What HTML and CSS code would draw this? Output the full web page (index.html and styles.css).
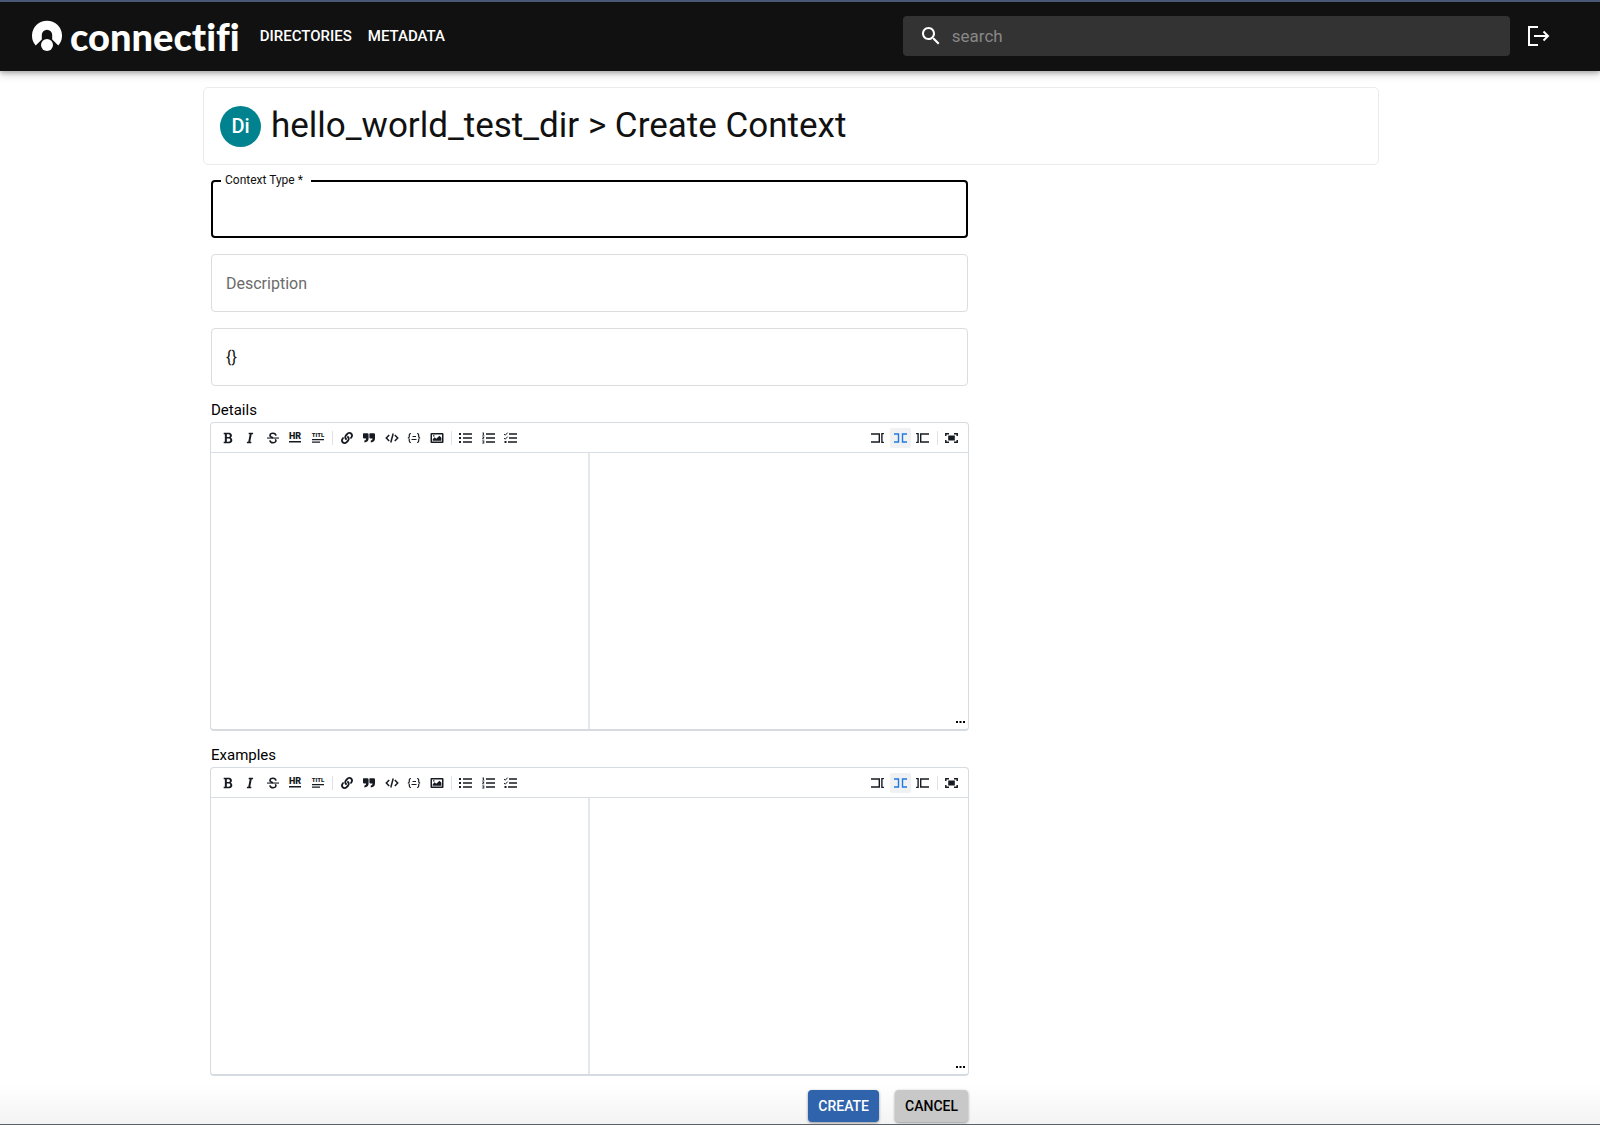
FILE: index.html
```html
<!DOCTYPE html>
<html lang="en">
<head>
<meta charset="utf-8">
<meta name="viewport" content="width=device-width, initial-scale=1">
<title>Connectifi - Create Context</title>
<link rel="stylesheet" href="styles.css">
</head>
<body>
<svg class="sprite" aria-hidden="true">
  <symbol id="bold" viewBox="0 0 384 512"><path d="M304.793 243.891c33.639-18.537 53.657-54.16 53.657-95.693 0-48.236-26.25-87.626-68.626-104.179C265.138 34.01 240.849 32 209.661 32H24c-8.837 0-16 7.163-16 16v33.113c0 8.837 7.163 16 16 16h33.113v318.53H24c-8.837 0-16 7.163-16 16V464c0 8.837 7.163 16 16 16h195.69c24.203 0 44.834-1.289 66.866-7.584C337.52 457.193 376 410.647 376 350.014c0-52.168-26.573-91.684-71.207-106.123zM142.217 100.809h67.444c16.294 0 27.536 2.019 37.525 6.717 15.828 8.479 24.906 26.502 24.906 49.446 0 35.029-20.32 56.79-53.029 56.79h-76.846V100.809zm112.642 305.475c-10.14 4.056-22.677 4.907-31.409 4.907h-81.233V281.943h84.367c39.645 0 63.057 25.38 63.057 63.653.001 28.425-13.66 52.483-34.782 60.688z"/></symbol>
  <symbol id="italic" viewBox="0 0 320 512"><path d="M204.758 416h-33.849l62.092-320h40.725a16 16 0 0 0 15.704-12.937l6.242-32C297.599 41.184 290.034 32 279.968 32H120.235a16 16 0 0 0-15.704 12.937l-6.242 32C96.362 86.816 103.927 96 113.993 96h33.846l-62.09 320H46.278a16 16 0 0 0-15.704 12.935l-6.245 32C22.402 470.815 29.965 480 40.034 480h158.479a16 16 0 0 0 15.704-12.935l6.245-32c1.927-9.88-5.638-19.065-15.704-19.065z"/></symbol>
  <symbol id="strike" viewBox="0 0 12 12"><path fill="none" stroke="currentColor" stroke-width="1.6" d="M9 3.6C8.700 2 7.500 1.300 6 1.300 4.200 1.300 3 2.200 3 3.500 3 4.800 4.200 5.300 6 5.800M8.300 7.300C9.800 9 8.500 10.700 6.200 10.700 4.300 10.700 3.100 9.900 2.900 8.300"/><path d="M0 5.500h12v1.100H0z"/></symbol>
  <symbol id="hr" viewBox="0 0 14 12"><text x="7" y="7" text-anchor="middle" class="glyph">HR</text><path d="M1 9h12v1.500H1z"/></symbol>
  <symbol id="title" viewBox="0 0 14 12"><text x="7" y="5" text-anchor="middle" class="glyph glyph-small">TITL</text><path d="M1 7h12v1.300H1zM1 9.500h8v1.300H1z"/></symbol>
  <symbol id="link" viewBox="0 0 512 512"><path d="M326.612 185.391c59.747 59.809 58.927 155.698.36 214.59-.11.12-.24.25-.36.37l-67.2 67.2c-59.27 59.27-155.699 59.262-214.96 0-59.27-59.26-59.27-155.7 0-214.96l37.106-37.106c9.84-9.84 26.786-3.3 27.294 10.606.648 17.722 3.826 35.527 9.69 52.721 1.986 5.822.567 12.262-3.783 16.612l-13.087 13.087c-28.026 28.026-28.905 73.66-1.155 101.96 28.024 28.579 74.086 28.749 102.325.51l67.2-67.19c28.191-28.191 28.073-73.757 0-101.83-3.701-3.694-7.429-6.564-10.341-8.569a16.037 16.037 0 0 1-6.947-12.606c-.396-10.567 3.348-21.456 11.698-29.806l21.054-21.055c5.521-5.521 14.182-6.199 20.584-1.731a152.482 152.482 0 0 1 20.522 17.197zM467.547 44.449c-59.261-59.262-155.69-59.27-214.96 0l-67.2 67.2c-.12.12-.25.25-.36.37-58.566 58.892-59.387 154.781.36 214.59a152.454 152.454 0 0 0 20.521 17.196c6.402 4.468 15.064 3.789 20.584-1.731l21.054-21.055c8.35-8.35 12.094-19.239 11.698-29.806a16.037 16.037 0 0 0-6.947-12.606c-2.912-2.005-6.640-4.875-10.341-8.569-28.073-28.073-28.191-73.639 0-101.830l67.200-67.190c28.239-28.239 74.300-28.069 102.325.510 27.750 28.300 26.872 73.934-1.155 101.960l-13.087 13.087c-4.350 4.350-5.769 10.790-3.783 16.612 5.864 17.194 9.042 34.999 9.690 52.721.509 13.906 17.454 20.446 27.294 10.606l37.106-37.106c59.271-59.259 59.271-155.699.001-214.959z"/></symbol>
  <symbol id="quote" viewBox="0 0 12 12"><path d="M.6 1.300h3.700q1.300 0 1.300 1.300v3.600Q5.600 10 1.400 10.400V8.600Q3.100 8.300 3.200 6.400H.8Q0 6.400 0 5.600V2Q0 1.300.6 1.300zM7 1.300h3.700Q12 1.300 12 2.600v3.600Q12 10 7.800 10.400V8.600Q9.500 8.300 9.600 6.400H7.200q-.8 0-.8-.8V2q0-.7.6-.7z"/></symbol>
  <symbol id="code" viewBox="0 0 14 12"><path fill="none" stroke="currentColor" stroke-width="1.500" d="M4.200 3 1.300 6l2.900 3M9.800 3l2.900 3-2.900 3M8.200 1.500 5.800 10.500"/></symbol>
  <symbol id="block" viewBox="0 0 14 12"><path fill="none" stroke="currentColor" stroke-width="1.200" d="M4 1.500Q2.300 1.500 2.300 3v1.500Q2.300 6 .8 6q1.500 0 1.500 1.500V9q0 1.500 1.700 1.500M10 1.500q1.700 0 1.700 1.500v1.500Q11.700 6 13.200 6q-1.500 0-1.500 1.500V9q0 1.500-1.700 1.500"/><path fill="none" stroke="currentColor" d="M5.500 4.500h3.500M4.500 7.500h5"/></symbol>
  <symbol id="image" viewBox="0 0 14 12"><path fill-rule="evenodd" d="M1.500 1h11q1 0 1 1v8q0 1-1 1h-11q-1 0-1-1V2q0-1 1-1zM2 2.400V9.500h10V2.400zM2.700 8.800V7.200l2-2 1.500 1.500 3.300-3 1.900 2v3.100zM3 3.200h1.500v1.400H3z"/></symbol>
  <symbol id="ul" viewBox="0 0 13 12"><path d="M0 1h2v2H0zM4 1.300h9v1.400H4zM0 5h2v2H0zM4 5.300h9v1.400H4zM0 9h2v2H0zM4 9.300h9v1.400H4z"/></symbol>
  <symbol id="ol" viewBox="0 0 13 12"><path d="M4 1.300h9v1.400H4zM4 5.300h9v1.400H4zM4 9.300h9v1.400H4zM.7.500h1.200V3h.6v.600H.2V3h.6V1.200H.3zM.2 4.500h2v1.300L1.200 6.700h1.100v.600H.2v-.700l1-1V5.200h-1zM.2 8.500h2.100v3H.2v-.700h1.300v-.500H.5v-.600h1v-.500H.2z"/></symbol>
  <symbol id="check" viewBox="0 0 13 12"><path d="M5 1.300h8v1.400H5zM5 5.300h8v1.400H5zM4 9.300h9v1.400H4zM.5 9h2v2h-2z"/><path fill="none" stroke="currentColor" d="m0 2 1.300 1.200L3.700.600M0 6l1.300 1.200 2.400-2.600"/></symbol>
  <symbol id="edit" viewBox="0 0 13 12"><path fill="none" stroke="currentColor" stroke-width="1.400" d="M0 2h8.300v8H0M12.900 1.600h-2v8.800h2"/></symbol>
  <symbol id="live" viewBox="0 0 13 12"><path fill="none" stroke="currentColor" stroke-width="1.400" d="M0 2h4.500v8H0M13 2H8.500v8H13"/></symbol>
  <symbol id="preview" viewBox="0 0 13 12"><path fill="none" stroke="currentColor" stroke-width="1.400" d="M13 2H4.700v8H13M.1 1.600h2v8.800h-2"/></symbol>
  <symbol id="full" viewBox="0 0 13 12"><path d="M3.200 3.500h6.600v5H3.200z"/><path fill="none" stroke="currentColor" stroke-width="1.500" d="M.8 4V1.700H4M9 1.700h3.200V4M12.200 8v2.300H9M4 10.300H.8V8"/></symbol>
</svg>

<header class="topbar">
  <a class="brand" href="#" aria-label="connectifi">
    <svg class="brand-mark" viewBox="0 0 30 31" aria-hidden="true"><path fill="currentColor" d="M3.700 25.500A15 15 0 1 1 26.300 25.500L20.200 19.500V15a5.200 5.200 0 0 0-10.400 0v4.500z"/><circle cx="15" cy="25" r="6" fill="currentColor"/></svg>
    <span class="brand-name">connectifi</span>
  </a>
  <nav class="nav">
    <a href="#">DIRECTORIES</a>
    <a href="#">METADATA</a>
  </nav>
  <label class="search">
    <svg viewBox="0 0 24 24" aria-hidden="true"><path fill="currentColor" d="M15.500 14h-.790l-.280-.270C15.410 12.590 16 11.110 16 9.500 16 5.910 13.090 3 9.500 3S3 5.910 3 9.500 5.910 16 9.500 16c1.610 0 3.090-.590 4.230-1.570l.270.280v.790l5 4.990L20.490 19l-4.990-5zm-6 0C7.010 14 5 11.990 5 9.500S7.010 5 9.500 5 14 7.010 14 9.500 11.990 14 9.500 14z"/></svg>
    <input type="search" placeholder="search" aria-label="search">
  </label>
  <button class="logout" type="button" aria-label="Log out">
    <svg viewBox="0 0 22 20" aria-hidden="true"><path fill="none" stroke="currentColor" stroke-width="2" d="M10 1H1v18h9M6 10h13.500M15.500 5.500 20 10l-4.500 4.500"/></svg>
  </button>
</header>

<main class="page">
  <section class="heading">
    <span class="avatar">Di</span>
    <h1>hello_world_test_dir &gt; Create Context</h1>
  </section>

  <form class="form">
    <div class="fields">
      <div class="field field-active">
        <label for="type">Context Type *</label>
        <input id="type" type="text">
      </div>
      <div class="field"><input type="text" placeholder="Description" aria-label="Description"></div>
      <div class="field"><input type="text" value="{}" aria-label="Schema"></div>
    </div>

    <div class="editor-block">
      <label for="details">Details</label>
      <div class="editor">
        <div class="toolbar">
          <div class="tools">
            <button type="button" aria-label="Bold"><svg><use href="#bold"/></svg></button>
            <button type="button" aria-label="Italic"><svg><use href="#italic"/></svg></button>
            <button type="button" aria-label="Strikethrough"><svg><use href="#strike"/></svg></button>
            <button type="button" aria-label="Rule"><svg class="wide"><use href="#hr"/></svg></button>
            <button type="button" aria-label="Title"><svg class="wide"><use href="#title"/></svg></button>
          </div>
          <span class="divider"></span>
          <div class="tools">
            <button type="button" aria-label="Link"><svg><use href="#link"/></svg></button>
            <button type="button" aria-label="Quote"><svg><use href="#quote"/></svg></button>
            <button type="button" aria-label="Code"><svg class="wide"><use href="#code"/></svg></button>
            <button type="button" aria-label="Code block"><svg class="wide"><use href="#block"/></svg></button>
            <button type="button" aria-label="Image"><svg class="wide"><use href="#image"/></svg></button>
          </div>
          <span class="divider"></span>
          <div class="tools tools-short">
            <button type="button" aria-label="Bulleted list"><svg class="list"><use href="#ul"/></svg></button>
            <button type="button" aria-label="Numbered list"><svg class="list"><use href="#ol"/></svg></button>
            <button type="button" aria-label="Checklist"><svg class="list"><use href="#check"/></svg></button>
          </div>
          <div class="tools tools-short tools-end">
            <button type="button" aria-label="Edit"><svg class="list"><use href="#edit"/></svg></button>
            <button type="button" class="active" aria-label="Live"><svg class="list"><use href="#live"/></svg></button>
            <button type="button" aria-label="Preview"><svg class="list"><use href="#preview"/></svg></button>
          </div>
          <span class="divider"></span>
          <button type="button" aria-label="Fullscreen"><svg class="list"><use href="#full"/></svg></button>
        </div>
        <div class="panes">
          <textarea id="details"></textarea>
          <div class="preview"></div>
        </div>
        <svg class="grip" viewBox="0 0 9 2" aria-hidden="true"><path d="M0 0h2v2H0zM3.500 0h2v2h-2zM7 0h2v2H7z"/></svg>
      </div>
    </div>

    <div class="editor-block">
      <label for="examples">Examples</label>
      <div class="editor">
        <div class="toolbar">
          <div class="tools">
            <button type="button" aria-label="Bold"><svg><use href="#bold"/></svg></button>
            <button type="button" aria-label="Italic"><svg><use href="#italic"/></svg></button>
            <button type="button" aria-label="Strikethrough"><svg><use href="#strike"/></svg></button>
            <button type="button" aria-label="Rule"><svg class="wide"><use href="#hr"/></svg></button>
            <button type="button" aria-label="Title"><svg class="wide"><use href="#title"/></svg></button>
          </div>
          <span class="divider"></span>
          <div class="tools">
            <button type="button" aria-label="Link"><svg><use href="#link"/></svg></button>
            <button type="button" aria-label="Quote"><svg><use href="#quote"/></svg></button>
            <button type="button" aria-label="Code"><svg class="wide"><use href="#code"/></svg></button>
            <button type="button" aria-label="Code block"><svg class="wide"><use href="#block"/></svg></button>
            <button type="button" aria-label="Image"><svg class="wide"><use href="#image"/></svg></button>
          </div>
          <span class="divider"></span>
          <div class="tools tools-short">
            <button type="button" aria-label="Bulleted list"><svg class="list"><use href="#ul"/></svg></button>
            <button type="button" aria-label="Numbered list"><svg class="list"><use href="#ol"/></svg></button>
            <button type="button" aria-label="Checklist"><svg class="list"><use href="#check"/></svg></button>
          </div>
          <div class="tools tools-short tools-end">
            <button type="button" aria-label="Edit"><svg class="list"><use href="#edit"/></svg></button>
            <button type="button" class="active" aria-label="Live"><svg class="list"><use href="#live"/></svg></button>
            <button type="button" aria-label="Preview"><svg class="list"><use href="#preview"/></svg></button>
          </div>
          <span class="divider"></span>
          <button type="button" aria-label="Fullscreen"><svg class="list"><use href="#full"/></svg></button>
        </div>
        <div class="panes">
          <textarea id="examples"></textarea>
          <div class="preview"></div>
        </div>
        <svg class="grip" viewBox="0 0 9 2" aria-hidden="true"><path d="M0 0h2v2H0zM3.500 0h2v2h-2zM7 0h2v2H7z"/></svg>
      </div>
    </div>

    <div class="actions">
      <button class="btn btn-primary" type="button">CREATE</button>
      <button class="btn" type="button">CANCEL</button>
    </div>
  </form>
</main>
</body>
</html>
```

FILE: styles.css
```css
* {
  box-sizing: border-box;
}

body {
  margin: 0;
  min-height: 100vh;
  background: #fff linear-gradient(to top, #f3f3f3, #fff) no-repeat bottom / 100% 40px;
  border-bottom: 1px solid #5d616b;
  color: #111;
  font-family: Roboto, "Liberation Sans", sans-serif;
}

button,
input,
textarea {
  margin: 0;
  padding: 0;
  border: 0;
  outline: 0;
  background: none;
  color: inherit;
  font: inherit;
}

a {
  color: inherit;
  text-decoration: none;
}

.sprite {
  display: none;
}

.topbar {
  display: flex;
  align-items: center;
  height: 71px;
  padding: 0 50px 2px 32px;
  border-top: 2px solid #4b5777;
  background: #111;
  color: #fff;
  box-shadow: 0 2px 4px rgba(0, 0, 0, .22), 0 4px 8px rgba(0, 0, 0, .16);
}

.brand {
  display: flex;
  align-items: center;
  gap: 8px;
}

.brand-mark {
  width: 30px;
  height: 31px;
}

.brand-name {
  font: 900 38px/44px Lato, "Liberation Sans", sans-serif;
  font-variant-ligatures: none;
}

.nav {
  display: flex;
  gap: 16px;
  margin-left: 20px;
  font-size: 15px;
  font-weight: 500;
}

.search {
  display: flex;
  align-items: center;
  gap: 9px;
  width: 40%;
  height: 40px;
  margin-left: auto;
  padding: 0 16px;
  border-radius: 4px;
  background: #333;
}

.search svg {
  width: 24px;
  height: 24px;
}

.search input {
  flex: 1;
  min-width: 0;
  font-size: 17px;
}

.search input::placeholder {
  color: #888;
}

.logout {
  display: flex;
  margin-left: 18px;
}

.logout svg {
  width: 22px;
  height: 20px;
}

.page {
  max-width: 1194px;
  margin: 0 auto;
  padding: 16px 18px 2px 0;
}

.heading {
  display: flex;
  align-items: center;
  gap: 10px;
  min-height: 78px;
  padding: 0 16px;
  border: 1px solid #ebebeb;
  border-radius: 5px;
  background: #fff;
}

.avatar {
  display: grid;
  place-items: center;
  width: 41px;
  height: 41px;
  border-radius: 50%;
  background: #00838f;
  color: #fff;
  font-size: 20px;
  font-weight: 500;
}

h1 {
  margin: 0;
  font-size: 35px;
  font-weight: 400;
  line-height: 44px;
}

.form {
  display: flex;
  flex-direction: column;
  gap: 14px;
  max-width: 765px;
  margin-top: 15px;
  padding-left: 8px;
}

.fields {
  display: flex;
  flex-direction: column;
  gap: 16px;
}

.field {
  position: relative;
}

.field input {
  display: block;
  width: 100%;
  height: 58px;
  padding: 0 14px;
  border: 1px solid #dcdcdc;
  border-radius: 4px;
  color: #111;
  font-size: 16px;
}

.field input::placeholder {
  color: #6b6b6b;
  opacity: 1;
}

.field-active input {
  border: 2px solid #000;
}

.field-active label {
  position: absolute;
  top: -8px;
  left: 10px;
  padding: 0 8px 0 4px;
  background: #fff;
  font-size: 12px;
  line-height: 16px;
}

.editor-block {
  margin-right: -1px;
  margin-left: -1px;
}

.editor-block label {
  display: block;
  padding-left: 1px;
  color: #000;
  font-size: 15px;
  line-height: 20px;
}

.editor {
  position: relative;
  display: flex;
  flex-direction: column;
  height: 309px;
  margin-top: 2px;
  border: 1px solid #d5dbe1;
  border-bottom-width: 2px;
  border-radius: 4px;
  background: #fff;
  color: #161b22;
}

.toolbar {
  display: flex;
  align-items: center;
  height: 30px;
  padding: 0 6px;
  border-bottom: 1px solid #d8dee4;
}

.tools {
  display: flex;
  justify-content: space-between;
  width: 111px;
}

.tools-short {
  width: 66px;
}

.tools-end {
  margin-left: auto;
}

.toolbar button {
  display: grid;
  place-items: center;
  width: 21px;
  height: 20px;
  border-radius: 2px;
}

.toolbar .active {
  background: #eff1f3;
  color: #1f78e0;
}

.toolbar svg {
  width: 12px;
  height: 12px;
  fill: currentColor;
}

.toolbar .wide {
  width: 14px;
}

.toolbar .list {
  width: 13px;
}

.glyph {
  font: 900 9px Roboto, "Liberation Sans", sans-serif;
}

.glyph-small {
  font-size: 6px;
}

.divider {
  width: 1px;
  height: 14px;
  margin: 0 3px 0 4px;
  background: #dfe3e8;
}

.panes {
  display: grid;
  grid-template-columns: 1fr 1fr;
  flex: 1;
}

.panes textarea {
  resize: none;
  padding: 10px;
  border-right: 2px solid #e3e8ed;
  font-size: 14px;
}

.grip {
  position: absolute;
  right: 3px;
  bottom: 6px;
  width: 9px;
  height: 2px;
}

.actions {
  display: flex;
  justify-content: flex-end;
  gap: 16px;
}

.btn {
  height: 32px;
  padding: 0 10px;
  border-radius: 4px;
  background: #c8c8c8;
  color: #000;
  font-size: 14px;
  font-weight: 500;
  box-shadow: 0 1px 3px rgba(0, 0, 0, .4);
}

.btn-primary {
  background: #2f64ad;
  color: #fff;
}
```
